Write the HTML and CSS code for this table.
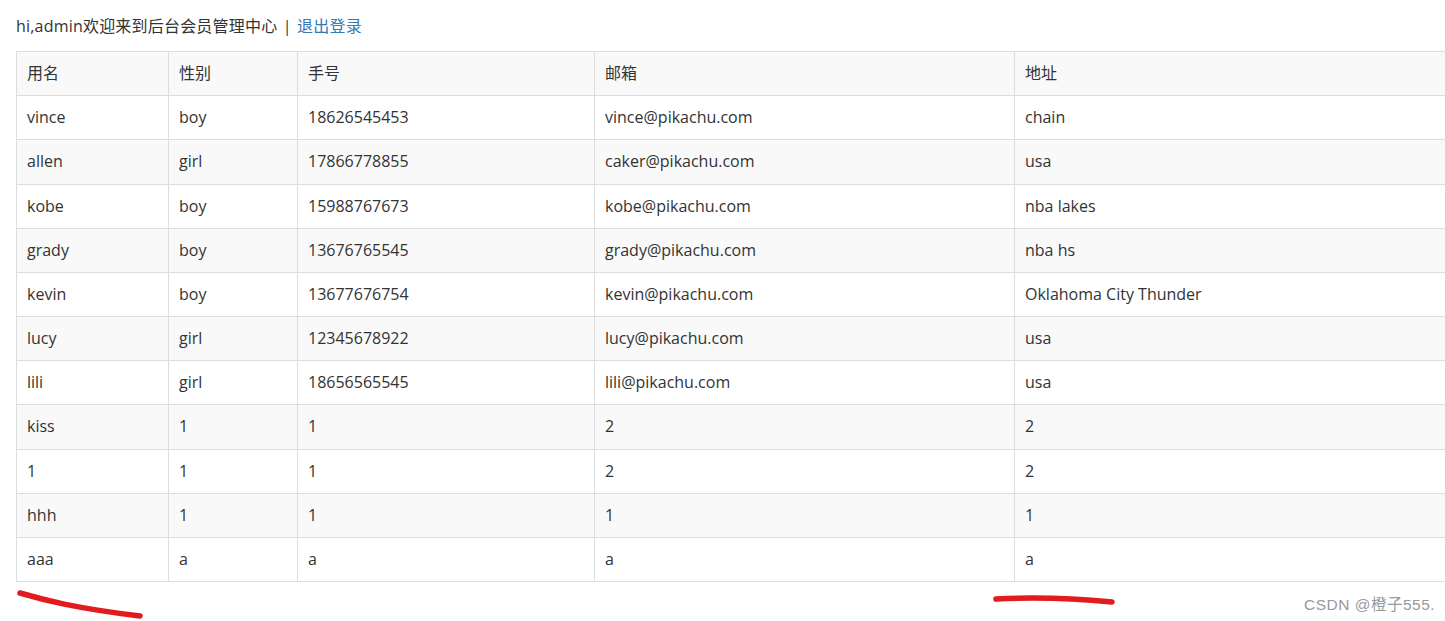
FILE: index.html
```html
<!DOCTYPE html>
<html lang="zh">
<head>
<meta charset="utf-8">
<title>会员管理中心</title>
<link rel="stylesheet" href="styles.css">
</head>
<body>
<div class="page">
  <p class="welcome">hi,admin欢迎来到后台会员管理中心 <span class="sep">|</span> <a href="#" class="logout">退出登录</a></p>
  <table class="members">
    <colgroup>
      <col class="c1"><col class="c2"><col class="c3"><col class="c4"><col class="c5">
    </colgroup>
    <thead>
      <tr><th>用名</th><th>性别</th><th>手号</th><th>邮箱</th><th>地址</th></tr>
    </thead>
    <tbody>
      <tr><td>vince</td><td>boy</td><td>18626545453</td><td>vince@pikachu.com</td><td>chain</td></tr>
      <tr><td>allen</td><td>girl</td><td>17866778855</td><td>caker@pikachu.com</td><td>usa</td></tr>
      <tr><td>kobe</td><td>boy</td><td>15988767673</td><td>kobe@pikachu.com</td><td>nba lakes</td></tr>
      <tr><td>grady</td><td>boy</td><td>13676765545</td><td>grady@pikachu.com</td><td>nba hs</td></tr>
      <tr><td>kevin</td><td>boy</td><td>13677676754</td><td>kevin@pikachu.com</td><td>Oklahoma City Thunder</td></tr>
      <tr><td>lucy</td><td>girl</td><td>12345678922</td><td>lucy@pikachu.com</td><td>usa</td></tr>
      <tr><td>lili</td><td>girl</td><td>18656565545</td><td>lili@pikachu.com</td><td>usa</td></tr>
      <tr><td>kiss</td><td>1</td><td>1</td><td>2</td><td>2</td></tr>
      <tr><td>1</td><td>1</td><td>1</td><td>2</td><td>2</td></tr>
      <tr><td>hhh</td><td>1</td><td>1</td><td>1</td><td>1</td></tr>
      <tr><td>aaa</td><td>a</td><td>a</td><td>a</td><td>a</td></tr>
    </tbody>
  </table>
</div>
<svg class="mark mark-left" width="140" height="40" viewBox="0 0 140 40">
  <path d="M6 7 C 30 14, 60 22, 126 30" fill="none" stroke="#e21b1e" stroke-width="5.5" stroke-linecap="round"/>
</svg>
<svg class="mark mark-right" width="130" height="16" viewBox="0 0 130 16">
  <path d="M5 6 C 40 4, 80 5, 121 9" fill="none" stroke="#e21b1e" stroke-width="5.5" stroke-linecap="round"/>
</svg>
<div class="watermark">CSDN @橙子555.</div>
</body>
</html>
```
FILE: styles.css
```css
html, body {
  margin: 0;
  padding: 0;
  overflow: hidden;
  background: #fff;
}
body {
  font-family: "Open Sans", "Noto Sans CJK SC", sans-serif;
  font-size: 16px;
  color: #333;
  position: relative;
  width: 1445px;
  height: 621px;
}
.page {
  padding: 14px 0 0 16px;
}
.welcome {
  margin: 0 0 13px 0;
  line-height: 24px;
  color: #333;
  letter-spacing: 0.2px;
}
.sep {
  padding: 0 1px;
}
.logout {
  color: #337ab7;
  text-decoration: none;
}
.members {
  border-collapse: collapse;
  width: 1460px;
  table-layout: fixed;
}
.c1 { width: 152px; }
.c2 { width: 129px; }
.c3 { width: 297px; }
.c4 { width: 420px; }
.c5 { width: auto; }
.members th,
.members td {
  border: 1px solid #ddd;
  padding: 10px 10px;
  line-height: 23.17px;
  text-align: left;
  font-weight: normal;
  white-space: nowrap;
}
.members thead tr {
  background: #f9f9f9;
}
.members tbody tr:nth-child(even) {
  background: #f9f9f9;
}
.mark {
  position: absolute;
}
.mark-left {
  left: 14px;
  top: 586px;
}
.mark-right {
  left: 991px;
  top: 593px;
}
.watermark {
  position: absolute;
  left: 1304px;
  top: 592px;
  font-family: "Liberation Sans", "Noto Sans CJK SC", sans-serif;
  font-size: 15.5px;
  color: #999;
  letter-spacing: 0.5px;
}
```
